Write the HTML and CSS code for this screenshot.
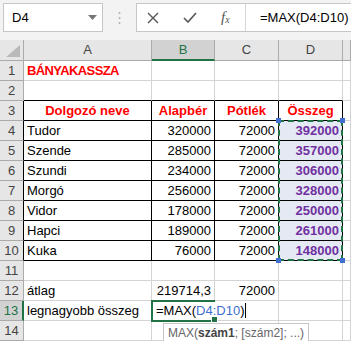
FILE: index.html
```html
<!doctype html>
<html>
  <head>
    <title>Bányakassza</title>
    <meta charset="utf-8">
    <link rel="stylesheet" href="styles.css">
  </head>
  <body>
    <div class="bar">
      <div class="namebox">
        <span>D4</span>
        <svg width="9" height="5" viewBox="0 0 9 5"><path d="M0 0h9L4.5 5z" fill="#777"/></svg>
      </div>
      <div class="grip">
        <svg width="3" height="14" viewBox="0 0 3 14"><circle cx="1.5" cy="2" r="1" fill="#b0b0b0"/><circle cx="1.5" cy="7" r="1" fill="#b0b0b0"/><circle cx="1.5" cy="12" r="1" fill="#b0b0b0"/></svg>
      </div>
      <div class="fbar">
        <div class="fbtns">
          <svg width="12" height="12" viewBox="0 0 12 12"><path d="M1 1l10 10M11 1L1 11" stroke="#555" stroke-width="1.4"/></svg>
          <svg width="14" height="11" viewBox="0 0 14 11"><path d="M1 6l4 4 8-9" stroke="#555" stroke-width="1.6" fill="none"/></svg>
          <span class="fx">f<sub>x</sub></span>
        </div>
        <div class="ftext">=MAX(D4:D10)</div>
      </div>
    </div>

    <div class="sheet">
      <div class="corner">
        <svg width="14" height="12" viewBox="0 0 14 12"><path d="M14 0v12H0z" fill="#b9b9b9"/></svg>
      </div>
      <div class="ch">A</div>
      <div class="ch sel">B</div>
      <div class="ch">C</div>
      <div class="ch">D</div>
      <div class="ch"></div>

      <div class="rh">1</div>
      <div class="c title">BÁNYAKASSZA</div>
      <div class="c"></div><div class="c"></div><div class="c"></div><div class="c"></div>

      <div class="rh">2</div>
      <div class="c bb"></div><div class="c bb"></div><div class="c bb"></div><div class="c bb"></div><div class="c"></div>

      <div class="rh bl">3</div>
      <div class="c t head">Dolgozó neve</div>
      <div class="c t head">Alapbér</div>
      <div class="c t head">Pótlék</div>
      <div class="c t head">Összeg</div>
      <div class="c"></div>

      <div class="rh bl">4</div>
      <div class="c t">Tudor</div><div class="c t n">320000</div><div class="c t n">72000</div>
      <div class="c t n sum first">392000
        <div class="range"><i class="h tl"></i><i class="h tr"></i><i class="h bl2"></i><i class="h br"></i></div>
      </div>
      <div class="c"></div>
      <div class="rh bl">5</div>
      <div class="c t">Szende</div><div class="c t n">285000</div><div class="c t n">72000</div><div class="c t n sum">357000</div><div class="c"></div>
      <div class="rh bl">6</div>
      <div class="c t">Szundi</div><div class="c t n">234000</div><div class="c t n">72000</div><div class="c t n sum">306000</div><div class="c"></div>
      <div class="rh bl">7</div>
      <div class="c t">Morgó</div><div class="c t n">256000</div><div class="c t n">72000</div><div class="c t n sum">328000</div><div class="c"></div>
      <div class="rh bl">8</div>
      <div class="c t">Vidor</div><div class="c t n">178000</div><div class="c t n">72000</div><div class="c t n sum">250000</div><div class="c"></div>
      <div class="rh bl">9</div>
      <div class="c t">Hapci</div><div class="c t n">189000</div><div class="c t n">72000</div><div class="c t n sum">261000</div><div class="c"></div>
      <div class="rh bl">10</div>
      <div class="c t">Kuka</div><div class="c t n">76000</div><div class="c t n">72000</div><div class="c t n sum">148000</div><div class="c"></div>

      <div class="rh">11</div>
      <div class="c"></div><div class="c"></div><div class="c"></div><div class="c"></div><div class="c"></div>

      <div class="rh">12</div>
      <div class="c">átlag</div><div class="c n">219714,3</div><div class="c n">72000</div><div class="c"></div><div class="c"></div>

      <div class="rh sel">13</div>
      <div class="c">legnagyobb összeg</div>
      <div class="c edit">=MAX(<span class="ref">D4:D10</span>)<span class="caret"></span>
        <div class="tip">MAX(<b>szám1</b>; [szám2]; ...)</div>
      </div>
      <div class="c"></div><div class="c"></div><div class="c"></div>

      <div class="rh">14</div>
      <div class="c"></div><div class="c"></div><div class="c"></div><div class="c"></div><div class="c"></div>
    </div>
  </body>
</html>
```

FILE: styles.css
```css
body {
  margin: 0;
  font-family: "Liberation Sans", Arial, sans-serif;
  font-size: 13px;
  color: #000;
  background: #fff;
  overflow: hidden;
}

/* formula bar */
.bar {
  height: 40px;
  background: #f3f3f3;
  display: flex;
  align-items: flex-start;
  padding: 3px 0 0 3px;
  box-sizing: border-box;
}
.namebox {
  width: 100px;
  height: 29px;
  box-sizing: border-box;
  border: 1px solid #c6c6c6;
  background: #fff;
  display: flex;
  align-items: center;
  justify-content: space-between;
  padding: 0 5px 0 8px;
  font-size: 13px;
}
.grip {
  width: 33px;
  height: 29px;
  display: flex;
  align-items: center;
  justify-content: center;
}
.fbar {
  flex: 1;
  height: 29px;
  box-sizing: border-box;
  border: 1px solid #c6c6c6;
  border-right: 0;
  background: #fff;
  display: flex;
}
.fbtns {
  width: 108px;
  display: flex;
  align-items: center;
  gap: 24px;
  padding-left: 10px;
  box-sizing: border-box;
}
.fx {
  font-family: "Liberation Serif", serif;
  font-style: italic;
  font-size: 15px;
  color: #555;
}
.fx sub {
  font-size: 10px;
  vertical-align: -1px;
}
.ftext {
  flex: 1;
  border-left: 1px solid #d6d6d6;
  padding-left: 14px;
  line-height: 27px;
  white-space: nowrap;
  overflow: hidden;
}

/* grid */
.sheet {
  display: grid;
  grid-template-columns: 24px 128px 63px 64px 64px 8px;
  grid-template-rows: 21px repeat(14, 20px);
}
.corner, .ch, .rh {
  background: #e6e6e6;
  color: #444;
  box-sizing: border-box;
}
.corner {
  border-right: 1px solid #ababab;
  border-bottom: 1px solid #ababab;
  display: flex;
  align-items: flex-end;
  justify-content: flex-end;
  padding: 0 3px 3px 0;
}
.ch {
  border-right: 1px solid #ababab;
  border-bottom: 1px solid #ababab;
  text-align: center;
  line-height: 20px;
}
.rh {
  border-right: 1px solid #ababab;
  border-bottom: 1px solid #ababab;
  text-align: center;
  line-height: 19px;
}
.ch.sel {
  background: #d2d2d2;
  color: #217346;
  border-bottom: 2px solid #217346;
}
.rh.sel {
  background: #d2d2d2;
  color: #217346;
  border-right: 2px solid #217346;
}
.rh.bl {
  border-right-color: #000;
}
.c {
  box-sizing: border-box;
  border-right: 1px solid #d4d4d4;
  border-bottom: 1px solid #d4d4d4;
  line-height: 19px;
  padding: 0 3px;
  white-space: nowrap;
}
.c.bb {
  border-bottom-color: #000;
}
.c.t {
  border-right-color: #000;
  border-bottom-color: #000;
}
.n {
  text-align: right;
}
.title {
  font-weight: bold;
  color: #ff0000;
  letter-spacing: -0.6px;
}
.head {
  font-weight: bold;
  color: #ff0000;
  text-align: center;
}
.sum {
  font-weight: bold;
  color: #7030a0;
  background: #e5e9f4;
}
.first {
  position: relative;
}

/* cell being edited */
.edit {
  position: relative;
  z-index: 2;
  border: 2px solid #217346;
  border-right: 0;
  margin: -1px 0 -1px -1px;
  line-height: 18px;
  padding-left: 3px;
}
.edit::after {
  content: "";
  position: absolute;
  right: -3px;
  bottom: -3px;
  width: 5px;
  height: 5px;
  background: #217346;
  border: 1px solid #fff;
}
.ref {
  color: #3f6fd1;
}
.caret {
  display: inline-block;
  width: 1px;
  height: 15px;
  background: #000;
  vertical-align: -3px;
}
.tip {
  position: absolute;
  left: 10px;
  top: 21px;
  padding: 0 4px;
  border: 1px solid #c6c6c6;
  background: #fff;
  color: #666;
  font-size: 12px;
  line-height: 18px;
  font-weight: normal;
}
.tip b {
  color: #444;
}

/* referenced range D4:D10 */
.range {
  position: absolute;
  left: -1px;
  top: -1px;
  width: 65px;
  height: 141px;
  box-sizing: border-box;
  z-index: 1;
  border: 2px dashed #217346;
  pointer-events: none;
}
.h {
  position: absolute;
  width: 5px;
  height: 5px;
  background: #3f6fd1;
}
.h.tl { left: -4px; top: -4px; }
.h.tr { right: -4px; top: -4px; }
.h.bl2 { left: -4px; bottom: -4px; }
.h.br { right: -4px; bottom: -4px; }
```
